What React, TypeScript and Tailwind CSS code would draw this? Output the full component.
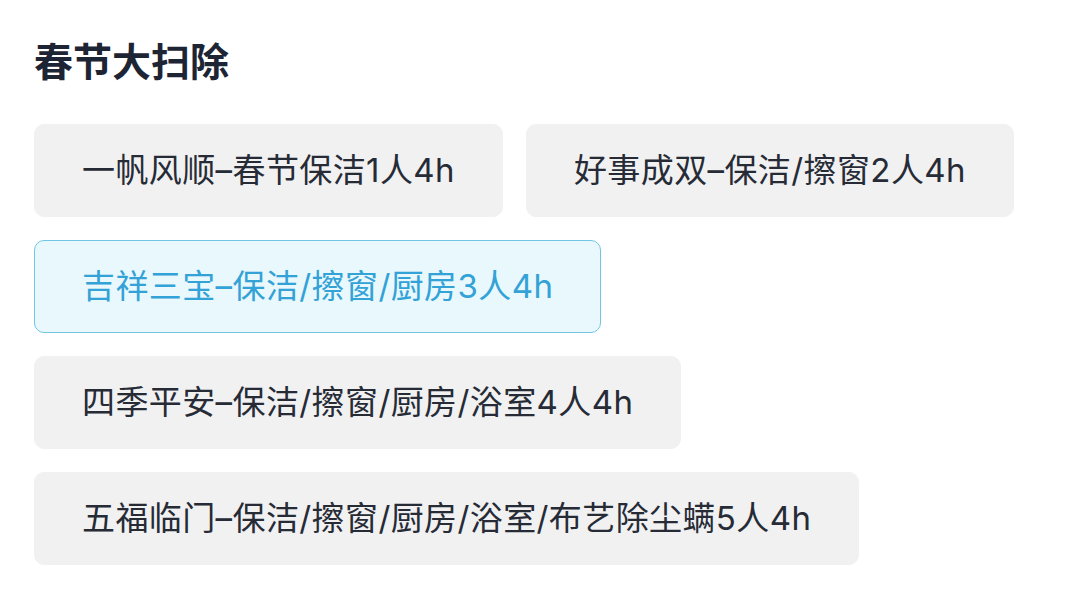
const packages = [
  { id: 1, label: '一帆风顺–春节保洁1人4h' },
  { id: 2, label: '好事成双–保洁/擦窗2人4h' },
  { id: 3, label: '吉祥三宝–保洁/擦窗/厨房3人4h' },
  { id: 4, label: '四季平安–保洁/擦窗/厨房/浴室4人4h' },
  { id: 5, label: '五福临门–保洁/擦窗/厨房/浴室/布艺除尘螨5人4h' },
];

const selectedId = 3;

export default function App() {
  return (
    <main
      className="min-h-screen w-[1080px] bg-white pl-[34px] pt-[36px]"
      style={{ fontFamily: 'Inter, "Noto Sans CJK SC", sans-serif' }}
    >
      <h1 className="text-[39px] font-bold leading-[52px] text-[#1d2433]">春节大扫除</h1>
      <div className="mt-[36px] flex w-[1000px] flex-wrap gap-[23px]">
        {packages.map((p) => {
          const active = p.id === selectedId;
          return (
            <button
              key={p.id}
              className={
                active
                  ? 'h-[93px] rounded-[10px] border border-[#72c6e4] bg-[#e8f8fd] px-[47px] text-[33px] tracking-[0.4px] text-[#33a2d6]'
                  : 'h-[93px] rounded-[10px] border border-[#f1f1f2] bg-[#f1f1f2] px-[47px] text-[33px] tracking-[0.4px] text-[#262b36]'
              }
            >
              {p.label}
            </button>
          );
        })}
      </div>
    </main>
  );
}
